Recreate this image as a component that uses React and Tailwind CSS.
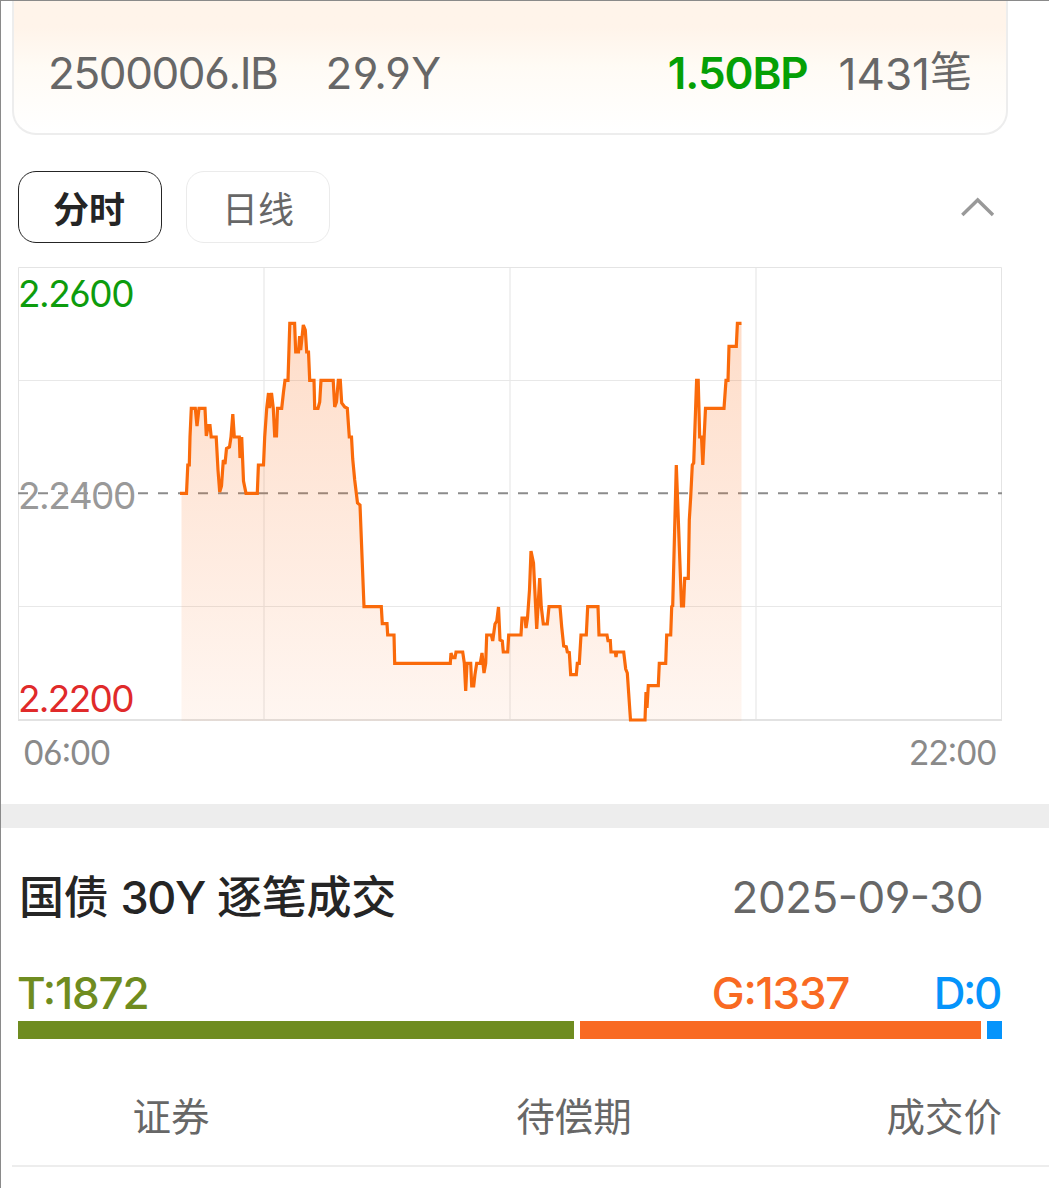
const linePoints = `
180,493.3 186.5,493.3 187.8,465 189.3,465 190,437 191.3,408.3 195.3,408.3 197,426 199,408.3 205,408.3
206.3,436 208.3,425.5 210,425.5 211.2,437 216.2,437 218,470 219.7,492 221.5,486 223.3,460 225,464 226.5,448.5 229.5,447
231,437 232.8,414 234.3,437 239.3,437 240,458 241.7,437 243.5,481 246,493.3 257.3,493.3 258.4,465 263.5,465
264.7,437 266.7,408.3 268.5,393 269.5,408 271.5,393 273.3,408.3 274.7,436 276.5,436 277.5,408.3 281.7,408.3 283.5,392 285,380.3
288,380.3 289.8,323.4 294.6,323.4 295.7,352 298.5,352 299.6,336 300.7,350 303.3,325 305.3,330 306.7,352 308.5,352
309.7,380.3 314,380.3 314.7,408.3 318,408.3 319.7,402 321,380.3 333.2,380.3 334.7,407 336.5,402 338.3,380.3 340.3,380.3
341.7,403 344.7,407 347.3,408.3 349.3,437 351.5,437 352.7,459 354.7,480 357.5,503 360,505 364,606.7 381.3,606.7
382.3,623.7 387,623.7 387.7,635 394,635 394.7,663.3 450.3,663.3 451,653 452.7,657.7 455,657.7 456,652 462.7,652
464.3,663 465.7,691 467,663.3 470.7,663.3 471.7,686 473.7,686 474.9,675 476.7,663.3 480.3,663.3 482,653 484,673
485.7,663.3 486.7,635 491.3,635 492.7,641 495,624 496.8,621 498.5,607 500,640 502.3,641 503.3,652 507.7,652
508.7,635 521,635 522,618 525,618 526,628 527.5,618 529.5,590 531,551 533.5,563 536.7,629 539.7,578 541.3,607
543.3,624 547.3,624 549,606.7 560,606.7 561.7,627 563.7,646 566.3,646.7 567.3,652 569.3,652.5 570.7,674.7 576.3,674.7
577.3,663.3 579.3,663.3 581,635 586.3,635 587.7,606.7 598,606.7 599,635 607,635 608,640.7 610.3,640.7 611,652
615.3,652 616,657 616.8,652 623.7,652 625.7,669 627.3,673 630.5,720 645,720 646,692 647,708 648.3,685.7 658.3,685.7
659.3,663.3 665.7,663.3 666.7,635 670.7,635 671.7,606.7 672.7,606 676.3,465 681.5,606 683.5,606 684.7,578.3 688.3,578.3
689.3,520 690.7,497 692.3,465 693.7,463 696.6,380.3 698.2,380.3 699.7,437 701.5,437 702.8,465 705.5,408.3 724,408.3
726,380.3 728,380.3 729,346.3 736.3,346.3 737.4,323.4 741.5,323.4`;

const stats = [
  { key: 'T', value: 1872, bar: 'w-[556px] bg-[#6f8c20]', text: 'justify-start text-[#6f8c20] tracking-[-1.2px] -ml-px' },
  { key: 'G', value: 1337, bar: 'w-[401px] bg-[#f96a22]', text: 'justify-center text-[#f96a22] tracking-[-1.2px]' },
  { key: 'D', value: 0, bar: 'w-[15px] bg-[#0594fb]', text: 'justify-end pr-[2px] text-[#0594fb] tracking-[-2.4px]' },
];

function BondCard() {
  return (
    <div className="ml-[11px] w-[996px] h-[134px] rounded-b-3xl border-2 border-t-0 border-[#ededed] bg-linear-to-b from-[#fff4ea] from-20% via-[#fffbf5] via-50% to-white">
      <div className="flex items-center pl-[34px] pr-[34px] h-[144px] text-[44px] text-[#676767]">
        <span className="tracking-[-1.4px]">2500006.IB</span>
        <span className="ml-[48px] tracking-[0.4px]">29.9Y</span>
        <span className="ml-auto font-semibold tracking-[-1.1px] text-[#05a005]">1.50BP</span>
        <span className="ml-[31px]">1431<span className="text-[42px] leading-none align-[3px]">笔</span></span>
      </div>
    </div>
  );
}

function ChartTabs() {
  return (
    <div className="flex items-center mt-9 ml-[17px] mr-[54px] h-[72px]">
      <button className="w-36 h-[72px] pt-1.5 pr-0.5 rounded-[18px] border border-[#252525] text-[36px] font-bold text-[#252525]">分时</button>
      <button className="w-36 h-[72px] pt-1.5 ml-6 rounded-[18px] border border-[#ebebeb] text-[36px] text-[#676767]">日线</button>
      <svg className="ml-auto" width="34" height="22" viewBox="961 196 34 22" fill="none" stroke="#999" strokeWidth="3.4">
        <path d="M962.3 215 L977.7 200 L993 215" />
      </svg>
    </div>
  );
}

function PriceChart() {
  return (
    <div className="relative mt-6 ml-[17px] w-[984px] h-[455px]">
      <svg width="984" height="455" viewBox="18 267 984 455" fill="none">
        <defs>
          <linearGradient id="area" x1="0" y1="323" x2="0" y2="720" gradientUnits="userSpaceOnUse">
            <stop offset="0" stopColor="#fb6a14" stopOpacity="0.23" />
            <stop offset="1" stopColor="#fb6a14" stopOpacity="0.06" />
          </linearGradient>
        </defs>
        {/* grid */}
        <path d="M264 267V720M510 267V720M756 267V720" stroke="#f1f1f1" strokeWidth="2" />
        <path d="M18 380.5H1002M18 606.5H1002" stroke="#e8e8e8" />
        <path d="M18.5 720V267.5H1001.5V720" stroke="#e4e4e4" />
        <path d="M18 720H1002" stroke="#e2e2e2" strokeWidth="2" />
        <path d="M18 493.3H1002" stroke="#8c8c8c" strokeWidth="2" strokeDasharray="10 10" />
        {/* price */}
        <path d={`M181.5 721 V493.3 L${linePoints.trim()} V721Z`} fill="url(#area)" />
        <polyline points={linePoints} stroke="#fa6a0a" strokeWidth="3.2" />
      </svg>
      <span className="absolute left-0 top-[6px] leading-[42px] text-[37px] tracking-[-1.5px] text-[#0d9c0d]">2.2600</span>
      <span className="absolute left-0 top-[208px] leading-[42px] text-[37px] tracking-[-1.5px] text-[#999]">2.2400</span>
      <span className="absolute left-0 top-[411px] leading-[42px] text-[37px] tracking-[-1.7px] text-[#e02a2a]">2.2200</span>
    </div>
  );
}

export default function App() {
  return (
    <div className="w-full h-[1188px] overflow-hidden bg-white border-l border-t border-[#8a8a8a] font-['Inter','Noto_Sans_CJK_SC',sans-serif] [font-feature-settings:'cv03','cv04','case'] leading-none">
      <BondCard />
      <ChartTabs />
      <PriceChart />
      <div className="flex justify-between h-[62px] items-center ml-[22px] mr-[53px] text-[34px] tracking-[-1.4px] text-[#8a8a8a]">
        <span>06:00</span>
        <span>22:00</span>
      </div>
      <div className="mt-5 h-6 bg-[#ededed]" />

      <div className="flex items-center justify-between ml-[18px] mr-[66px] h-[138px]">
        <h2 className="text-[45px] font-medium tracking-[-0.2px] text-[#252525]">
          国债 <span className="tracking-[-1.3px]">30Y</span> 逐笔成交
        </h2>
        <span className="text-[44px] tracking-[-0.5px] text-[#676767]">2025-09-30</span>
      </div>

      <div className="flex gap-1.5 ml-[17px] h-[73px]">
        {stats.map((s) => (
          <div key={s.key} className="flex flex-col">
            <div className={`flex w-0 min-w-full h-[55px] pb-0.5 items-center text-[44px] font-medium whitespace-nowrap ${s.text}`}>
              <span>{s.key}:{s.value}</span>
            </div>
            <div className={`h-[18px] ${s.bar}`} />
          </div>
        ))}
      </div>

      <div className="ml-[11px] h-[128px] flex items-center pt-[30px] pr-[47px] border-b-2 border-[#ededed] text-[38.5px] text-[#676767]">
        <span className="w-[318px] text-center">证券</span>
        <span className="w-[488px] text-center">待偿期</span>
        <span className="flex-1 text-right">成交价</span>
      </div>
    </div>
  );
}
